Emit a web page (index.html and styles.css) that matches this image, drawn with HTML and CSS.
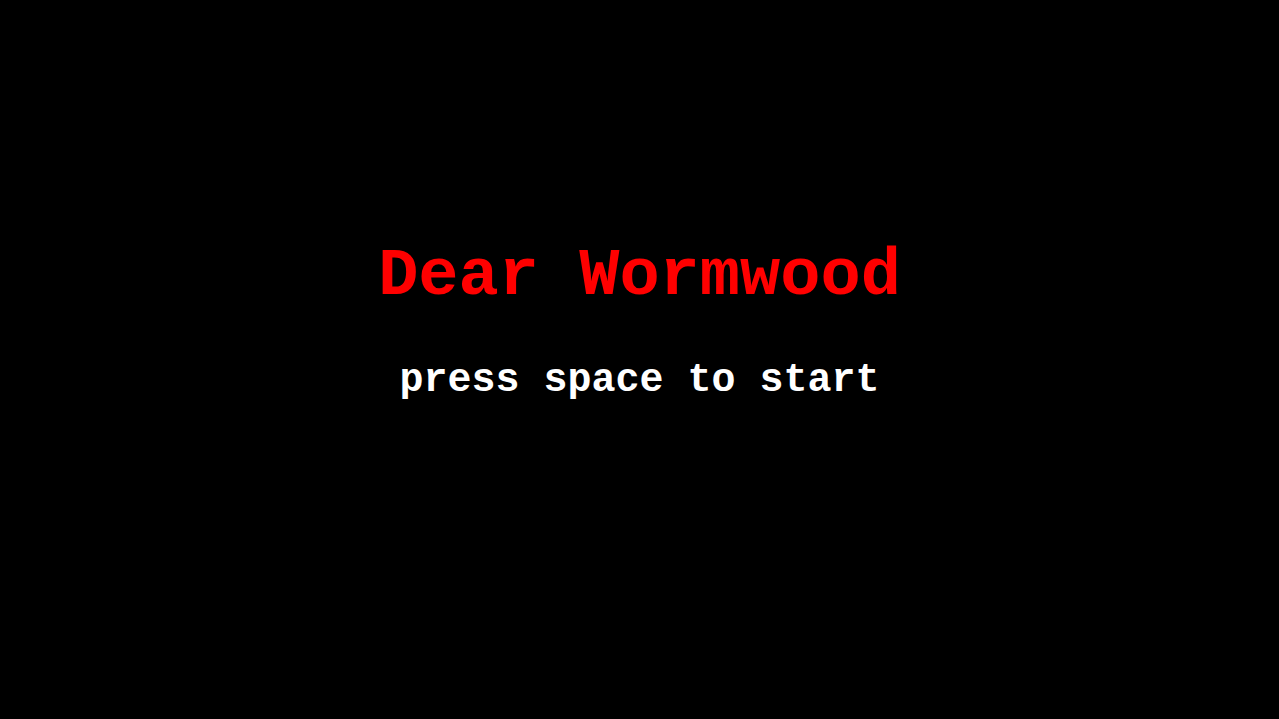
FILE: index.html
```html
<!DOCTYPE html>
<html lang="en">
<head>
    <meta charset="UTF-8">
    <meta name="viewport" content="width=device-width, initial-scale=1.0">
    <title>Dear Wormwood</title>
    <link rel="stylesheet" href="styles.css">
</head>
<body>
    <div class="title-screen">
        <h1 class="game-title">Dear Wormwood</h1>
        <p class="start-hint">press space to start</p>
    </div>
</body>
</html>
```

FILE: styles.css
```css
html, body {
    margin: 0;
    height: 100%;
    background-color: #000;
}
body {
    font-family: "Liberation Mono", "Courier New", monospace;
    font-weight: bold;
    overflow: hidden;
}
.title-screen {
    display: flex;
    flex-direction: column;
    align-items: center;
    padding-top: 236px;
}
.game-title {
    margin: 0;
    font-size: 67px;
    line-height: 80px;
    color: #f00;
}
.start-hint {
    margin: 41px 0 0;
    font-size: 40px;
    line-height: 48px;
    color: #fff;
}
```
